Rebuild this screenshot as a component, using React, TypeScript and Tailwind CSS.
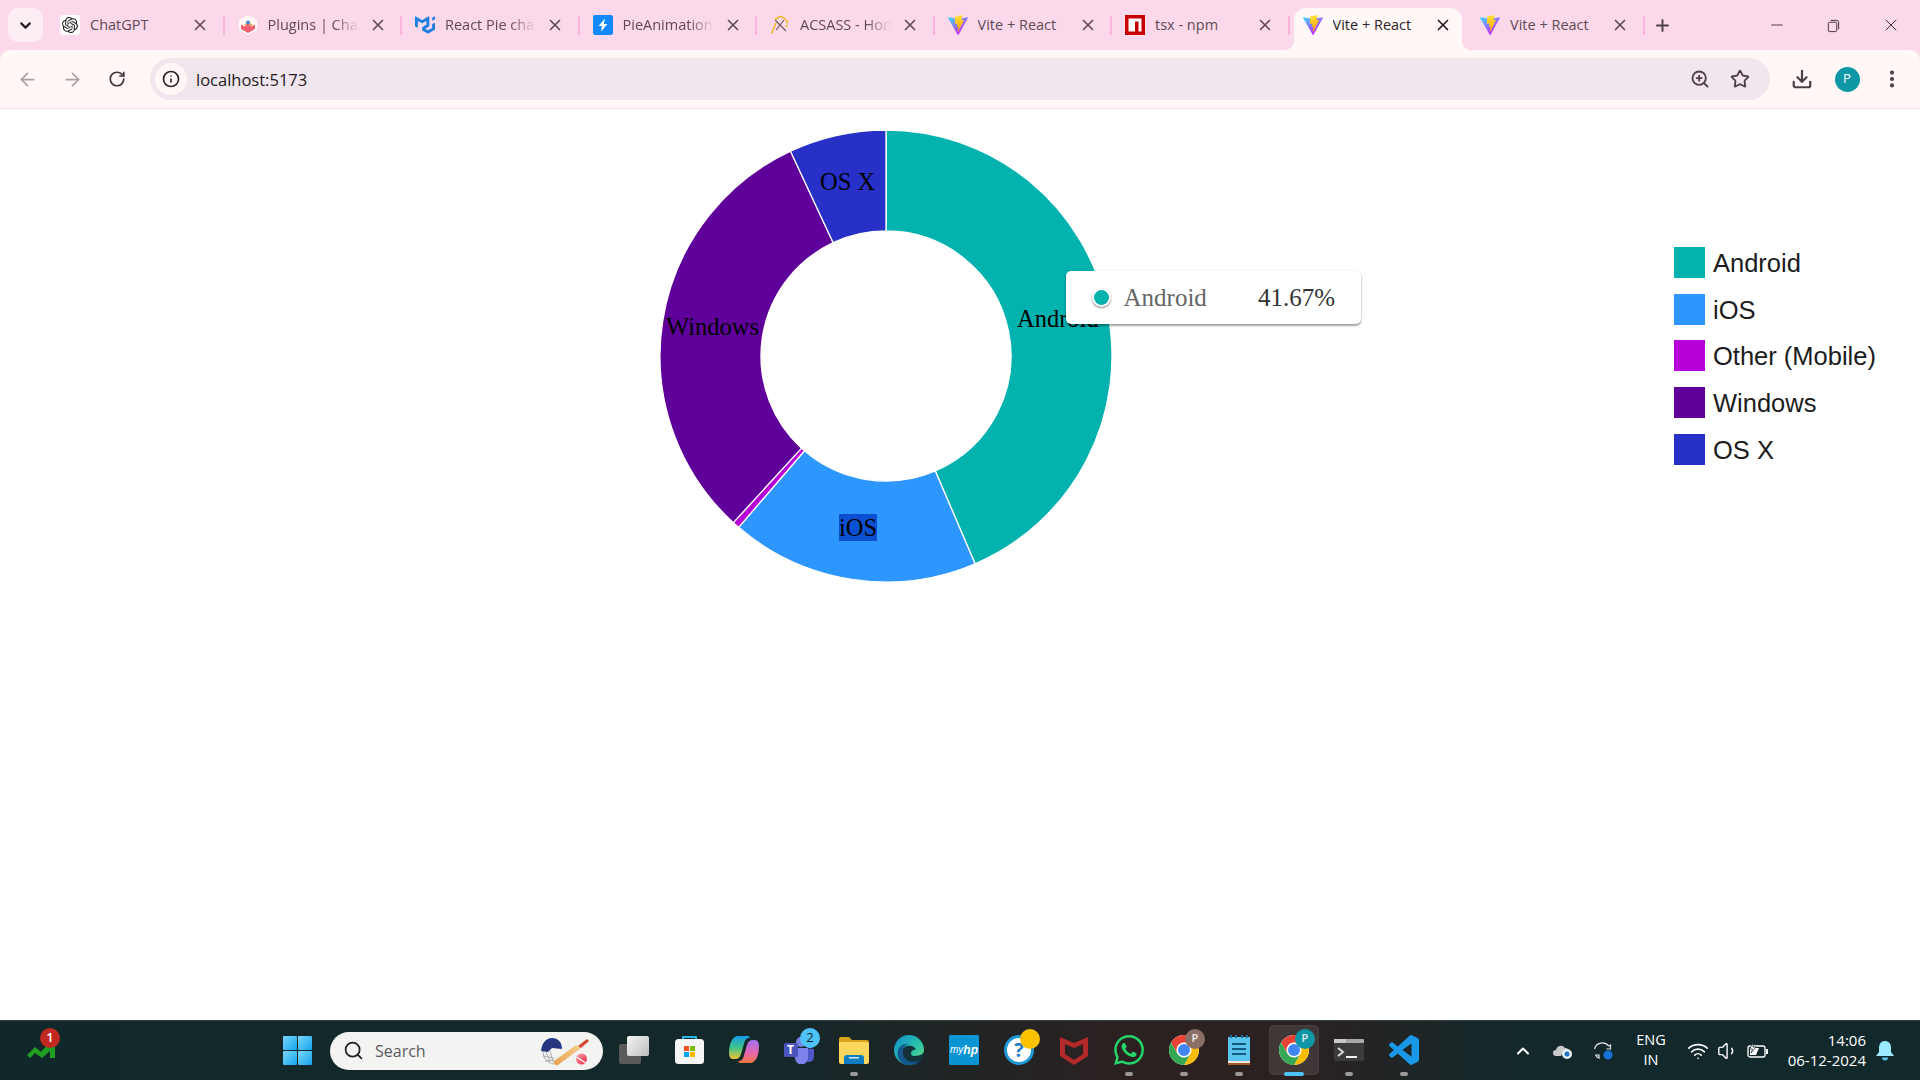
import React from 'react'
import {
  ArrowLeft,
  ArrowRight,
  ChevronDown,
  ChevronUp,
  Download,
  Info,
  Minus,
  MoreVertical,
  Plus,
  RotateCw,
  Search,
  Star,
  Volume1,
  Wifi,
  X,
  ZoomIn,
} from 'lucide-react'
import { SiMui, SiOpenai, SiWhatsapp } from 'react-icons/si'

const CX = 228
const CY = 228
const R_OUT = 226
const R_IN = 125

const slices = [
  { color: '#02B2AF', from: 0, to: 156.8 },
  { color: '#2E96FF', from: 156.8, to: 220.7 },
  { color: '#B800D8', from: 220.7, to: 222.5 },
  { color: '#60009B', from: 222.5, to: 335 },
  { color: '#2731C8', from: 335, to: 360 },
]

const legend = [
  { color: '#02B2AF', label: 'Android' },
  { color: '#2E96FF', label: 'iOS' },
  { color: '#B800D8', label: 'Other (Mobile)' },
  { color: '#60009B', label: 'Windows' },
  { color: '#2731C8', label: 'OS X' },
]

function point(r: number, deg: number) {
  const a = (deg * Math.PI) / 180
  return `${CX + r * Math.sin(a)} ${CY - r * Math.cos(a)}`
}

function slicePath(from: number, to: number) {
  const large = to - from > 180 ? 1 : 0
  return `M${point(R_OUT, from)} A${R_OUT} ${R_OUT} 0 ${large} 1 ${point(R_OUT, to)} L${point(R_IN, to)} A${R_IN} ${R_IN} 0 ${large} 0 ${point(R_IN, from)} Z`
}

function ViteIcon({ id, className = 'w-5 h-5' }: { id: string; className?: string }) {
  return (
    <svg viewBox="0 0 256 257" className={className}>
      <defs>
        <linearGradient id={`${id}a`} x1="0" y1="0.1" x2="0.6" y2="0.85">
          <stop offset="0" stopColor="#41D1FF" />
          <stop offset="1" stopColor="#BD34FE" />
        </linearGradient>
        <linearGradient id={`${id}b`} x1="0.45" y1="0" x2="0.55" y2="0.9">
          <stop offset="0" stopColor="#FFEA83" />
          <stop offset="0.1" stopColor="#FFDD35" />
          <stop offset="1" stopColor="#FFA800" />
        </linearGradient>
      </defs>
      <path
        fill={`url(#${id}a)`}
        d="M255.153 37.938 134.897 252.976c-2.483 4.44-8.862 4.466-11.382.048L.875 37.958c-2.746-4.814 1.371-10.646 6.827-9.67l120.385 21.517a6.537 6.537 0 0 0 2.322-.004l117.867-21.483c5.438-.991 9.574 4.796 6.877 9.62Z"
      />
      <path
        fill={`url(#${id}b)`}
        d="M185.432.063 96.44 17.501a3.268 3.268 0 0 0-2.634 3.014l-5.474 92.456a3.268 3.268 0 0 0 3.997 3.378l24.777-5.718c2.318-.535 4.413 1.507 3.936 3.838l-7.361 36.047c-.495 2.426 1.782 4.5 4.151 3.78l15.304-4.649c2.372-.72 4.652 1.36 4.15 3.788l-11.698 56.621c-.732 3.542 3.979 5.473 5.943 2.437l1.313-2.028 72.516-144.72c1.215-2.423-.88-5.186-3.54-4.672l-25.505 4.922c-2.396.462-4.435-1.77-3.759-4.114l16.646-57.705c.677-2.35-1.37-4.583-3.769-4.113Z"
      />
    </svg>
  )
}

function ChatGptIcon() {
  return (
    <div className="w-5 h-5 bg-white rounded-[3px] flex items-center justify-center">
      <SiOpenai className="w-4 h-4 text-[#222]" />
    </div>
  )
}

function ChartJsIcon() {
  return (
    <svg viewBox="0 0 20 20" className="w-5 h-5">
      <path fill="#fffaf8" d="M10 0l9 5v10l-9 5-9-5V5z" />
      <path fill="#f25f70" d="M3 9.500l3.500 2L10 8l3.500 3.500 3.500-2v4.500l-7 4-7-4z" />
      <path fill="#f9a63f" d="M6.500 9.500L10 6.500l4.500 3-1 2L10 8l-2.500 3z" />
      <circle cx="10" cy="7.500" r="2" fill="#3f8fd8" />
    </svg>
  )
}

function BoltSquareIcon() {
  return (
    <svg viewBox="0 0 20 20" className="w-5 h-5">
      <rect width="20" height="20" rx="2" fill="#1389fd" />
      <path fill="#fff" d="M9 11H5.500L12 3.500 10.800 9h3.700L8 16.500z" />
    </svg>
  )
}

function AcsassIcon() {
  return (
    <svg viewBox="0 0 20 20" className="w-5 h-5" fill="none">
      <path stroke="#f1b620" strokeWidth="1.500" d="M1.500 18.500L6 8M9 1.500c4 0 8.500 3 8.500 7" />
      <path stroke="#6b5a5a" strokeWidth="1.200" d="M5 5l11 11M14 5L6 15" />
      <path stroke="#f1b620" strokeWidth="1.500" d="M5 4.500L9 2M16 12l1.500-2" />
    </svg>
  )
}

function NpmIcon() {
  return (
    <svg viewBox="0 0 20 20" className="w-5 h-5">
      <rect width="20" height="20" fill="#c70000" />
      <path fill="#fff" d="M3.500 3.500h13v13h-3V6.500h-3.500v10h-6.500z" />
    </svg>
  )
}

const tabs = [
  { title: 'ChatGPT', icon: <ChatGptIcon />, fade: false },
  { title: 'Plugins | Chart.js', icon: <ChartJsIcon />, fade: true },
  { title: 'React Pie chart', icon: <SiMui className="w-5 h-5 text-[#1a7fe0]" />, fade: true },
  { title: 'PieAnimation', icon: <BoltSquareIcon />, fade: true },
  { title: 'ACSASS - Home', icon: <AcsassIcon />, fade: true },
  { title: 'Vite + React', icon: <ViteIcon id="tab6" />, fade: false },
  { title: 'tsx - npm', icon: <NpmIcon />, fade: false },
  { title: 'Vite + React', icon: <ViteIcon id="tab8" />, fade: false, active: true },
  { title: 'Vite + React', icon: <ViteIcon id="tab9" />, fade: false },
]

function BrowserTab({ title, icon, fade, active }: { title: string; icon: React.ReactNode; fade: boolean; active?: boolean }) {
  return (
    <div className="relative w-[177.5px] h-[42px] shrink-0 flex items-center pl-[13px]">
      {active && (
        <>
          <div className="absolute left-[4px] right-[5px] top-0 bottom-0 bg-[#fff8f6] rounded-t-[12px]" />
          <div className="absolute left-[-6px] bottom-0 w-[10px] h-[10px] bg-[radial-gradient(circle_at_0_0,transparent_10px,#fff8f6_10.5px)]" />
          <div className="absolute right-[-5px] bottom-0 w-[10px] h-[10px] bg-[radial-gradient(circle_at_100%_0,transparent_10px,#fff8f6_10.5px)]" />
        </>
      )}
      <div className="relative shrink-0 w-5 h-5 flex items-center justify-center -translate-y-[4px]">{icon}</div>
      <div
        className={`relative ml-[10px] w-[91px] overflow-hidden whitespace-nowrap text-[14.5px] leading-5 -translate-y-[4px] ${
          active ? 'text-[#2b2327]' : 'text-[#5e4b56]'
        } ${fade ? '[mask-image:linear-gradient(90deg,#000_72%,transparent)]' : ''}`}
      >
        {title}
      </div>
      <X
        className={`absolute left-[144px] top-[8px] w-[18px] h-[18px] ${active ? 'text-[#241c20]' : 'text-[#5e4b56]'}`}
        strokeWidth={2.2}
      />
      {!active && <div className="absolute right-0 top-[8px] w-[2px] h-[19px] bg-[#f9b3dc]" />}
    </div>
  )
}

function TabStrip() {
  return (
    <div className="h-[50px] shrink-0 bg-[#fbd8ea] flex items-end relative font-['Open_Sans',sans-serif]">
      <div className="absolute left-[8px] top-[8px] w-[35px] h-[34px] rounded-[10px] bg-[#fdeef6] flex items-center justify-center">
        <ChevronDown className="w-[17px] h-[17px] text-[#241c20]" strokeWidth={3} />
      </div>
      <div className="flex ml-[47px]">
        {tabs.map((t, i) => (
          <BrowserTab key={i} title={t.title} icon={t.icon} fade={t.fade} active={t.active} />
        ))}
      </div>
      <div className="relative flex items-center self-stretch ml-[8.5px]">
        <Plus className="w-[19px] h-[19px] text-[#4e3f47]" strokeWidth={2.4} />
      </div>
      <div className="ml-auto flex self-stretch items-center text-[#3a2d33]">
        <div className="w-[56px] flex justify-center pl-[2px]">
          <Minus className="w-[18px] h-[18px]" strokeWidth={1.2} />
        </div>
        <div className="w-[58px] flex justify-center">
          <svg viewBox="0 0 16 16" className="w-[15px] h-[15px]" fill="none" stroke="currentColor" strokeWidth="1">
            <rect x="2.500" y="4.500" width="9" height="10" rx="1.500" />
            <path d="M5 2.500h6.500a2 2 0 0 1 2 2V12" />
          </svg>
        </div>
        <div className="w-[58px] flex justify-center">
          <X className="w-[20px] h-[20px]" strokeWidth={1.2} />
        </div>
      </div>
    </div>
  )
}

function Toolbar() {
  return (
    <div className="h-[59px] shrink-0 bg-[#fbd8ea] font-['Open_Sans',sans-serif]">
      <div className="h-full bg-[#fff8f6] rounded-t-[10px] border-b border-[#f3dbe7] flex items-center pl-[4.5px] pr-[5.5px]">
        <div className="w-[45px] flex justify-center">
          <ArrowLeft className="w-[21px] h-[21px] text-[#a9a0a4]" strokeWidth={2} />
        </div>
        <div className="w-[45px] flex justify-center">
          <ArrowRight className="w-[21px] h-[21px] text-[#a9a0a4]" strokeWidth={2} />
        </div>
        <div className="w-[45px] flex justify-center">
          <RotateCw className="w-[18px] h-[18px] text-[#43363c]" strokeWidth={2.3} />
        </div>
        <div className="ml-[10.5px] flex-1 h-[42px] rounded-full bg-[#f1e5ee] flex items-center pl-[5px] pr-[10px]">
          <div className="w-[32px] h-[32px] rounded-full bg-[#fff8f6] flex items-center justify-center">
            <Info className="w-[18px] h-[18px] text-[#2b2327]" strokeWidth={2.2} />
          </div>
          <span className="ml-[9px] translate-y-[1px] text-[16.500px] text-[#241c20]">localhost:5173</span>
          <div className="ml-auto w-[40px] flex justify-center">
            <ZoomIn className="w-[20px] h-[20px] text-[#4e3f47]" strokeWidth={2.2} />
          </div>
          <div className="w-[40px] flex justify-center">
            <Star className="w-[20px] h-[20px] text-[#4e3f47]" strokeWidth={2.2} />
          </div>
        </div>
        <div className="ml-[9.5px] w-[45px] flex justify-center">
          <Download className="w-[22px] h-[22px] text-[#4e3f47]" strokeWidth={2.4} />
        </div>
        <div className="w-[45px] flex justify-center">
          <div className="w-[25px] h-[25px] rounded-full bg-[#0e97a5] text-white text-[13px] flex items-center justify-center">P</div>
        </div>
        <div className="w-[45px] flex justify-center">
          <MoreVertical className="w-[22px] h-[22px] text-[#4e3f47]" strokeWidth={2.6} />
        </div>
      </div>
    </div>
  )
}

function Donut() {
  return (
    <svg width="456" height="456" viewBox="0 0 456 456" className="shrink-0 font-['Liberation_Serif',serif]">
      {slices.map((s) => (
        <path key={s.color} d={slicePath(s.from, s.to)} fill={s.color} stroke="#fff" strokeWidth="1.300" />
      ))}
      <rect x="181" y="386" width="38" height="27" fill="#0b50d0" />
      <text x="8" y="206.500" fontSize="24.500" fill="#000">Windows</text>
      <text x="162" y="62" fontSize="24.500" fill="#000">OS X</text>
      <text x="359" y="199" fontSize="24.500" fill="#000">Android</text>
      <text x="181" y="408" fontSize="24.500" fill="#000">iOS</text>
    </svg>
  )
}

function ChartArea() {
  return (
    <div className="relative flex-1 bg-white flex items-start pl-[658px] pt-[19px]">
      <Donut />
      <div className="ml-auto mt-[119px] w-[246px] flex flex-col gap-[15.700px] font-['Liberation_Sans',sans-serif]">
        {legend.map((l) => (
          <div key={l.label} className="flex items-center h-[31px]">
            <LegendSwatch color={l.color} />
            <span className="ml-[8px] translate-y-[1px] text-[25.500px] leading-[31px] text-[#1c1c1c]">{l.label}</span>
          </div>
        ))}
      </div>
      <div className="absolute left-[1066px] top-[162px] w-[295px] h-[53px] bg-white rounded-[5px] shadow-[0_2px_2px_rgba(0,0,0,0.35),0_0_3px_rgba(0,0,0,0.1)] flex items-center pl-[25.500px] pr-[26px] font-['Liberation_Serif',serif] text-[25px]">
        <div className="w-[19px] h-[19px] rounded-full bg-[#02B2AF] border-[2.500px] border-white shadow-[0_1px_2px_rgba(0,0,0,0.5)]" />
        <span className="ml-[13px] text-[#666]">Android</span>
        <span className="ml-auto text-[#333]">41.67%</span>
      </div>
    </div>
  )
}

function LegendSwatch({ color }: { color: string }) {
  return (
    <svg width="31" height="31" className="shrink-0">
      <rect width="31" height="31" fill={color} />
    </svg>
  )
}

function StockIcon() {
  return (
    <div className="relative w-[28px] h-[34px]">
      <svg viewBox="0 0 28 16" className="absolute left-0 top-[15px] w-[28px] h-[16px]">
        <path fill="#1f9e1f" d="M0 12l8-8 6 5 8-9h6v15h-5V8l-8 7-7-5-5 5z" />
      </svg>
      <div className="absolute left-[13px] top-0 w-[20px] h-[20px] rounded-full bg-[#c1281f] text-white text-[13px] font-semibold flex items-center justify-center">1</div>
    </div>
  )
}

function WindowsLogo() {
  return (
    <svg viewBox="0 0 29 29" className="w-[29px] h-[29px] shrink-0">
      <defs>
        <linearGradient id="win" x1="0" y1="0" x2="1" y2="1">
          <stop offset="0" stopColor="#7ad7fb" />
          <stop offset="1" stopColor="#16a5ee" />
        </linearGradient>
      </defs>
      <rect x="0" y="0" width="14" height="14" rx="1" fill="url(#win)" />
      <rect x="15" y="0" width="14" height="14" rx="1" fill="url(#win)" />
      <rect x="0" y="15" width="14" height="14" rx="1" fill="url(#win)" />
      <rect x="15" y="15" width="14" height="14" rx="1" fill="url(#win)" />
    </svg>
  )
}

function CricketArt() {
  return (
    <svg viewBox="0 0 50 34" className="w-[50px] h-[34px]">
      <defs>
        <linearGradient id="batG" x1="0" y1="1" x2="1" y2="0">
          <stop offset="0" stopColor="#e8a050" />
          <stop offset="1" stopColor="#f6cd8c" />
        </linearGradient>
        <linearGradient id="ballG" x1="0" y1="0" x2="1" y2="1">
          <stop offset="0" stopColor="#f9a0a8" />
          <stop offset="1" stopColor="#e92a4a" />
        </linearGradient>
      </defs>
      <path fill="none" stroke="#a9adad" strokeWidth="1" d="M3 17c0 7 4 12 11 13M6 18l4 10M10 17l3 11M3 22l11 2M5 27l9-1" />
      <path fill="#27367f" d="M1 17C2 9 6 4 12 4c6 0 10 4 10 11l-10-1-4 4z" />
      <path fill="url(#batG)" d="M14 27L36 11l5 3-23 17c-3 1-5-2-4-4z" />
      <path fill="#d8452f" d="M38 12l9-7 2 2-8 7z" />
      <circle cx="41.500" cy="25" r="5.500" fill="url(#ballG)" />
      <path stroke="#fff" strokeWidth="1.200" d="M36.500 23l9 6" />
    </svg>
  )
}

function TaskView() {
  return (
    <div className="relative w-[30px] h-[28px]">
      <div className="absolute left-0 bottom-0 w-[22px] h-[20px] rounded-[2px] bg-[#5a5a5a]" />
      <div className="absolute right-0 top-0 w-[22px] h-[20px] rounded-[2px] bg-gradient-to-br from-white to-[#c4c4c4] opacity-95" />
    </div>
  )
}

function StoreIcon() {
  return (
    <svg viewBox="0 0 29 29" className="w-[29px] h-[29px]">
      <path fill="none" stroke="#27b5e8" strokeWidth="2" d="M8 5V2h13v3" />
      <rect x="0" y="4" width="29" height="25" rx="3.500" fill="#f5f5f5" />
      <rect x="9" y="11" width="5" height="5" fill="#f25022" />
      <rect x="15" y="11" width="5" height="5" fill="#7fba00" />
      <rect x="9" y="17" width="5" height="5" fill="#00a4ef" />
      <rect x="15" y="17" width="5" height="5" fill="#ffb900" />
    </svg>
  )
}

function CopilotIcon() {
  return (
    <svg viewBox="0 0 30 27" className="w-[30px] h-[27px]">
      <defs>
        <linearGradient id="copA" x1="0.3" y1="0" x2="0.3" y2="1">
          <stop offset="0" stopColor="#1a9be8" />
          <stop offset="0.5" stopColor="#3ec48a" />
          <stop offset="1" stopColor="#f0c637" />
        </linearGradient>
        <linearGradient id="copB" x1="0.3" y1="0" x2="0.3" y2="1">
          <stop offset="0" stopColor="#f0783c" />
          <stop offset="0.45" stopColor="#e866b4" />
          <stop offset="1" stopColor="#9d72ee" />
        </linearGradient>
      </defs>
      <path fill="url(#copA)" d="M9 0h10c1 0 2 1 1.500 2-2-.5-4 1-5 4L12 18c-.8 3-2.500 5-6 5H4C1.500 23 0 21 0 17 0 8 3 0 9 0z" />
      <path fill="url(#copB)" transform="rotate(180 15 13.5)" d="M9 0h10c1 0 2 1 1.500 2-2-.5-4 1-5 4L12 18c-.8 3-2.500 5-6 5H4C1.500 23 0 21 0 17 0 8 3 0 9 0z" />
    </svg>
  )
}

function TeamsIcon() {
  return (
    <div className="relative w-[30px] h-[28px]">
      <svg viewBox="0 0 30 28" className="absolute inset-0 w-[30px] h-[28px]">
        <circle cx="17" cy="6" r="5" fill="#7b83eb" />
        <circle cx="26" cy="9" r="3.500" fill="#5059c9" />
        <path fill="#5059c9" d="M20 13h10v8a5 5 0 0 1-8 4z" />
        <path fill="#7b83eb" d="M9 12h15v10a6.500 6.500 0 0 1-13 0z" />
        <rect x="0" y="7" width="14" height="14" rx="1.500" fill="#4b53bc" />
      </svg>
      <span className="absolute left-[3px] top-[6px] text-white text-[12px] font-bold leading-4">T</span>
      <div className="absolute left-[16px] top-[-8px] w-[20px] h-[20px] rounded-full bg-[#4fc3f7] text-[#10222a] text-[13px] flex items-center justify-center">2</div>
    </div>
  )
}

function FilesIcon() {
  return (
    <svg viewBox="0 0 30 28" className="w-[30px] h-[28px]">
      <path fill="#d9a21b" d="M0 3a2 2 0 0 1 2-2h8l3 3h15a2 2 0 0 1 2 2v6H0z" />
      <path fill="#fcd75f" d="M0 6h28a2 2 0 0 1 2 2v18a2 2 0 0 1-2 2H2a2 2 0 0 1-2-2z" />
      <path fill="#0f7dc2" d="M5 28v-6a3 3 0 0 1 3-3h14a3 3 0 0 1 3 3v6z" />
      <rect x="10" y="21" width="10" height="1.500" fill="#cfe9fa" />
    </svg>
  )
}

function EdgeIcon() {
  return (
    <svg viewBox="0 0 30 30" className="w-[30px] h-[30px]">
      <defs>
        <linearGradient id="edgeA" x1="0" y1="0" x2="1" y2="1">
          <stop offset="0" stopColor="#0c8fd0" />
          <stop offset="0.6" stopColor="#2ec4a6" />
          <stop offset="1" stopColor="#7de06a" />
        </linearGradient>
      </defs>
      <circle cx="15" cy="15" r="15" fill="url(#edgeA)" />
      <path fill="#13323a" d="M30 17c-2 3-6 4-10 4-2 0-3-1-3-3s2-3 5-4c-2-3-6-4-9-3-4 1-6 5-5 9 1 4 4 7 8 8l5 3c6-2 9-8 9-14z" />
      <path fill="#14588f" d="M15 30C6 30 2 22 4 15c2-5 7-7 11-6-5 1-7 5-6 10 1 5 5 8 10 8 3 0 6-1 8-3-3 4-7 6-12 6z" />
    </svg>
  )
}

function MyHpIcon() {
  return (
    <div className="w-[30px] h-[30px] bg-[#0b94d3] rounded-[1px] flex items-center justify-center text-white text-[10px] italic font-['Liberation_Sans',sans-serif]">
      <span>my</span>
      <span className="font-bold text-[12px]">hp</span>
    </div>
  )
}

function HelpIcon() {
  return (
    <div className="relative w-[30px] h-[30px]">
      <div className="w-[30px] h-[30px] rounded-full border-[3px] border-[#1f9ad8] bg-white flex items-center justify-center text-[#1f7fc0] text-[20px] font-bold">?</div>
      <div className="absolute left-[16px] top-[-6px] w-[20px] h-[20px] rounded-full bg-[#fcc200]" />
    </div>
  )
}

function McafeeIcon() {
  return (
    <svg viewBox="0 0 28 30" className="w-[28px] h-[30px]">
      <path fill="#b4292a" d="M0 2l14 6 14-6v19l-14 9-14-9zM5 9v10l9 6 9-6V9l-9 4z" fillRule="evenodd" />
    </svg>
  )
}

function ChromeIcon({ badge }: { badge: string }) {
  return (
    <div className="relative w-[30px] h-[30px]">
      <svg viewBox="4 4 40 40" className="w-[30px] h-[30px]">
        <circle cx="24" cy="24" r="20" fill="#fff" />
        <path fill="#EA4335" d="M41.320 14A20 20 0 0 0 6.680 14L15.340 29A10 10 0 0 1 24 14Z" />
        <path fill="#FBBC04" d="M24 44A20 20 0 0 0 41.320 14L24 14A10 10 0 0 1 32.660 29Z" />
        <path fill="#34A853" d="M6.680 14A20 20 0 0 0 24 44L32.660 29A10 10 0 0 1 15.340 29Z" />
        <circle cx="24" cy="24" r="8" fill="#4285F4" />
      </svg>
      <div
        className={`absolute left-[16px] top-[-6px] w-[20px] h-[20px] rounded-full text-white/85 text-[11px] font-semibold flex items-center justify-center ${badge}`}
      >
        P
      </div>
    </div>
  )
}

function NotepadIcon() {
  return (
    <svg viewBox="0 0 22 30" className="w-[22px] h-[30px]">
      <rect x="0" y="2" width="22" height="24" fill="#5bc4ec" />
      <rect x="0" y="26" width="22" height="2" fill="#f3e6d8" />
      <rect x="0" y="28" width="22" height="2" fill="#a15a2a" />
      <path fill="#1b6fa8" d="M2 0h2v3H2zM7 0h2v3H7zM13 0h2v3h-2zM18 0h2v3h-2z" />
      <path stroke="#14597f" strokeWidth="1.800" d="M4 9h14M4 14h14M4 19h14" />
    </svg>
  )
}

function TerminalIcon() {
  return (
    <svg viewBox="0 0 30 22" className="w-[30px] h-[22px]">
      <rect width="30" height="22" rx="2" fill="#3c3c3c" />
      <rect width="30" height="4" rx="1" fill="#a8a8a8" />
      <rect x="0" width="12" height="4" fill="#c8c8c8" />
      <path fill="none" stroke="#d8d8d8" strokeWidth="2" d="M4 9l5 4-5 4" />
      <path stroke="#f0f0f0" strokeWidth="2" d="M12 18h11" />
    </svg>
  )
}

function VsCodeIcon() {
  return (
    <svg viewBox="0 0 24 24" className="w-[30px] h-[30px]">
      <path
        fill="#1a98e8"
        d="M23.15 2.587L18.21.21a1.494 1.494 0 0 0-1.705.29l-9.46 8.63-4.12-3.128a.999.999 0 0 0-1.276.057L.327 7.261A1 1 0 0 0 .326 8.74L3.899 12 .326 15.26a1 1 0 0 0 .001 1.479L1.65 17.94a.999.999 0 0 0 1.276.057l4.12-3.128 9.46 8.63a1.492 1.492 0 0 0 1.704.29l4.942-2.377A1.5 1.5 0 0 0 24 20.06V3.939a1.5 1.5 0 0 0-.85-1.352zm-5.146 14.861L10.826 12l7.178-5.448v10.896z"
      />
    </svg>
  )
}

function Slot({ children, dot, active }: { children: React.ReactNode; dot?: boolean; active?: boolean }) {
  return (
    <div className="relative w-[55px] h-[50px] flex items-center justify-center">
      {active && <div className="absolute left-[2.500px] w-[50px] top-0 bottom-0 rounded-[5px] bg-white/10 border border-white/5" />}
      <div className="relative">{children}</div>
      {dot && <div className="absolute left-[23.500px] bottom-[-1px] w-[8px] h-[4px] rounded-full bg-[#9a9a9a]" />}
      {active && <div className="absolute left-[17.500px] bottom-[-1px] w-[20px] h-[4px] rounded-full bg-[#4fc3f7]" />}
    </div>
  )
}

function Taskbar() {
  return (
    <div className="h-[60px] shrink-0 border-t border-[#33413f] bg-[linear-gradient(90deg,#11282a_0%,#14282a_40%,#2b2121_58%,#2b2121_68%,#14282a_78%,#11292b_100%)] flex items-center font-['Open_Sans',sans-serif] text-white">
      <div className="ml-[27px] mb-[11px] w-[28px]">
        <StockIcon />
      </div>
      <div className="ml-[228px]">
        <WindowsLogo />
      </div>
      <div className="ml-[18px] w-[273px] h-[38px] rounded-full bg-[#f3f4f2] flex items-center pl-[13px] pr-[13px] text-[#5a5a5a]">
        <Search className="w-[21px] h-[21px] text-[#222]" strokeWidth={2} />
        <span className="ml-[11px] text-[16px]">Search</span>
        <div className="ml-auto">
          <CricketArt />
        </div>
      </div>
      <div className="ml-[3.500px] mb-[2px] flex">
        <Slot><TaskView /></Slot>
        <Slot><StoreIcon /></Slot>
        <Slot><CopilotIcon /></Slot>
        <Slot><TeamsIcon /></Slot>
        <Slot dot><FilesIcon /></Slot>
        <Slot><EdgeIcon /></Slot>
        <Slot><MyHpIcon /></Slot>
        <Slot><HelpIcon /></Slot>
        <Slot><McafeeIcon /></Slot>
        <Slot dot><SiWhatsapp className="w-[30px] h-[30px] text-[#25d366]" /></Slot>
        <Slot dot><ChromeIcon badge="bg-[#8a6f64]" /></Slot>
        <Slot dot><NotepadIcon /></Slot>
        <Slot active><ChromeIcon badge="bg-[#0d97a5]" /></Slot>
        <Slot dot><TerminalIcon /></Slot>
        <Slot dot><VsCodeIcon /></Slot>
      </div>
      <div className="ml-auto flex items-center pr-[25px]">
        <div className="w-[40px] flex justify-center">
          <ChevronUp className="w-[20px] h-[20px]" strokeWidth={2.4} />
        </div>
        <div className="w-[40px] flex justify-center">
          <svg viewBox="0 0 20 16" className="w-[20px] h-[16px]">
            <path fill="#c8c8c8" d="M3 13a3 3 0 0 1 0-6 5 5 0 0 1 9-2 4 4 0 0 1 4 4H10l-2 4z" />
            <circle cx="14" cy="11" r="5" fill="#e8f1fa" />
            <circle cx="14" cy="11" r="2.500" fill="#1d72c7" />
          </svg>
        </div>
        <div className="w-[40px] flex justify-center">
          <svg viewBox="0 0 20 20" className="w-[20px] h-[20px]" fill="none" stroke="#e6e6e6" strokeWidth="1.200">
            <path d="M1.500 8a8 8 0 0 1 14-3l2-1v4h-4" />
            <path d="M2 14h4v3l-2-1a4 4 0 0 1-1-2" />
            <circle cx="15" cy="14" r="4.500" fill="#1573d8" stroke="none" />
          </svg>
        </div>
        <div className="w-[56px] mb-[2px] flex flex-col items-center text-[14.500px] leading-[20px]">
          <span>ENG</span>
          <span>IN</span>
        </div>
        <div className="ml-[4px] w-[30px] flex justify-center">
          <Wifi className="w-[22px] h-[22px]" strokeWidth={1.8} />
        </div>
        <div className="w-[30px] flex justify-center">
          <Volume1 className="w-[22px] h-[22px]" strokeWidth={1.5} />
        </div>
        <div className="w-[30px] flex justify-center">
          <svg viewBox="0 0 22 16" className="w-[22px] h-[16px]" fill="none" stroke="#fff" strokeWidth="1.300">
            <rect x="1" y="3" width="17" height="11" rx="2" />
            <path fill="#fff" stroke="none" d="M19 6h2v5h-2zM3 5h9l-3 7H3z" />
            <path fill="#fff" stroke="#11282a" strokeWidth="0.700" d="M6 0L2.500 6h3L4 10l5-6H6z" />
          </svg>
        </div>
        <div className="ml-[3px] mb-[1px] w-[90px] flex flex-col items-end text-[15px] leading-[20px]">
          <span>14:06</span>
          <span>06-12-2024</span>
        </div>
        <div className="ml-[9px] w-[20px] flex justify-center">
          <svg viewBox="0 0 18 20" className="w-[18px] h-[20px]">
            <path fill="#9be9ff" d="M9 0c4 0 6 3 6 7v4l3 4H0l3-4V7c0-4 2-7 6-7z" />
            <path fill="#56c8ee" d="M6 16.500h6a3 3 0 0 1-6 0z" />
          </svg>
        </div>
      </div>
    </div>
  )
}

export default function App() {
  return (
    <div className="w-full h-screen flex flex-col overflow-hidden bg-white">
      <TabStrip />
      <Toolbar />
      <ChartArea />
      <Taskbar />
    </div>
  )
}
